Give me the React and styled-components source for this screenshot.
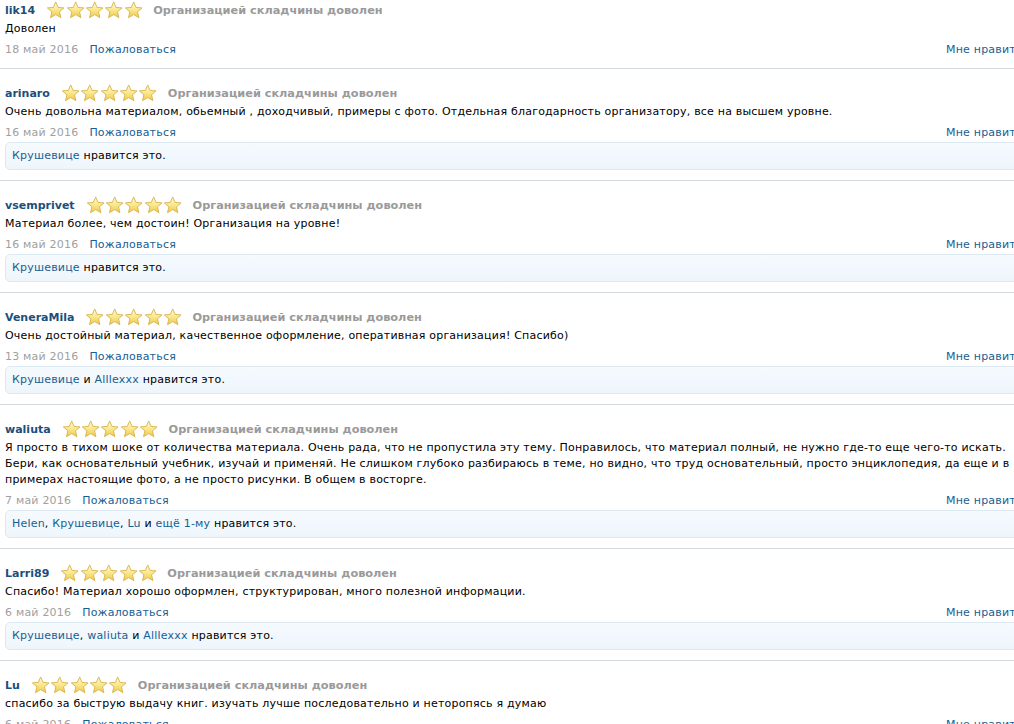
import styled, { createGlobalStyle } from "styled-components";

const GlobalStyle = createGlobalStyle`
  body {
    margin: 0;
    background: #fff;
    overflow: hidden;
    font-family: "DejaVu Sans", Tahoma, sans-serif;
    font-size: 11px;
    letter-spacing: 0.2px;
    color: #000;
  }
`;

const Page = styled.div`
  width: 1034px;
  margin-top: -14px;
`;

const Review = styled.div`
  padding: 14px 5px 10px 5px;
  border-bottom: 1px solid #d3d8e0;
`;

const Head = styled.div`
  display: flex;
  align-items: center;
  height: 20px;
`;

const User = styled.a`
  font-weight: bold;
  font-size: 11px;
  letter-spacing: 0;
  color: #1b4f7c;
  text-decoration: none;
  margin-right: 11px;
`;

const Stars = styled.span`
  display: flex;
  margin-right: 10px;
`;

const Verdict = styled.span`
  font-weight: bold;
  font-size: 11.3px;
  letter-spacing: 0;
  color: #9a9a9a;
`;

const Text = styled.div`
  margin-top: 1px;
  line-height: 16px;
  white-space: nowrap;
`;

const Meta = styled.div`
  display: flex;
  align-items: center;
  margin-top: 5px;
  line-height: 16px;
`;

const Date = styled.span`
  color: #a0a0a0;
  margin-right: 11px;
`;

const Link = styled.a`
  color: #176093;
  text-decoration: none;
`;

const LikeLink = styled(Link)`
  margin-left: auto;
`;

const LikeBox = styled.div`
  margin-top: 1px;
  padding: 5px 6px;
  line-height: 16px;
  background: linear-gradient(#f5fafe, #eef6fc);
  border: 1px solid #dde9f2;
  border-radius: 5px;
`;

function Star({ id }) {
  return (
    <svg width="19.4" height="18" viewBox="0 0 20 19">
      <defs>
        <linearGradient id={id} x1="0" y1="0" x2="0" y2="1">
          <stop offset="0" stopColor="#fffbe6" />
          <stop offset="0.55" stopColor="#f9e585" />
          <stop offset="1" stopColor="#ecc850" />
        </linearGradient>
      </defs>
      <path
        d="M10 1 L12.5 6.8 L18.8 7.3 L14 11.4 L15.5 17.6 L10 14.3 L4.5 17.6 L6 11.4 L1.2 7.3 L7.5 6.8 Z"
        fill={`url(#${id})`}
        stroke="#d9b54c"
        strokeWidth="1"
        strokeLinejoin="round"
      />
    </svg>
  );
}

const reviews = [
  { user: "lik14", date: "18 май 2016", text: ["Доволен"] },
  {
    user: "arinaro",
    date: "16 май 2016",
    text: [
      "Очень довольна материалом, обьемный , доходчивый, примеры с фото. Отдельная благодарность организатору, все на высшем уровне.",
    ],
    likes: ["Крушевице"],
  },
  {
    user: "vsemprivet",
    date: "16 май 2016",
    text: ["Материал более, чем достоин! Организация на уровне!"],
    likes: ["Крушевице"],
  },
  {
    user: "VeneraMila",
    date: "13 май 2016",
    text: [
      "Очень достойный материал, качественное оформление, оперативная организация! Спасибо)",
    ],
    likes: ["Крушевице", "Alllexxx"],
  },
  {
    user: "waliuta",
    date: "7 май 2016",
    text: [
      "Я просто в тихом шоке от количества материала. Очень рада, что не пропустила эту тему. Понравилось, что материал полный, не нужно где-то еще чего-то искать.",
      "Бери, как основательный учебник, изучай и применяй. Не слишком глубоко разбираюсь в теме, но видно, что труд основательный, просто энциклопедия, да еще и в",
      "примерах настоящие фото, а не просто рисунки. В общем в восторге.",
    ],
    likes: ["Helen", "Крушевице", "Lu"],
    more: "ещё 1-му",
  },
  {
    user: "Larri89",
    date: "6 май 2016",
    text: [
      "Спасибо! Материал хорошо оформлен, структурирован, много полезной информации.",
    ],
    likes: ["Крушевице", "waliuta", "Alllexxx"],
  },
  {
    user: "Lu",
    date: "6 май 2016",
    text: [
      "спасибо за быструю выдачу книг. изучать лучше последовательно и неторопясь я думаю",
    ],
    likes: ["Крушевице"],
  },
];

function Likes({ names, more }) {
  const items = more ? [...names, more] : names;
  return (
    <LikeBox>
      {items.map((n, i) => (
        <span key={i}>
          {i > 0 && (i === items.length - 1 ? " и " : ", ")}
          <Link href="#">{n}</Link>
        </span>
      ))}{" "}
      нравится это.
    </LikeBox>
  );
}

export default function App() {
  return (
    <>
      <GlobalStyle />
      <Page>
        {reviews.map((r, i) => (
          <Review key={i}>
            <Head>
              <User href="#">{r.user}</User>
              <Stars>
                {[0, 1, 2, 3, 4].map((s) => (
                  <Star key={s} id={`g${i}${s}`} />
                ))}
              </Stars>
              <Verdict>Организацией складчины доволен</Verdict>
            </Head>
            <Text>
              {r.text.map((t, k) => (
                <div key={k}>{t}</div>
              ))}
            </Text>
            <Meta>
              <Date>{r.date}</Date>
              <Link href="#">Пожаловаться</Link>
              <LikeLink href="#">Мне нравится</LikeLink>
            </Meta>
            {r.likes && <Likes names={r.likes} more={r.more} />}
          </Review>
        ))}
      </Page>
    </>
  );
}
